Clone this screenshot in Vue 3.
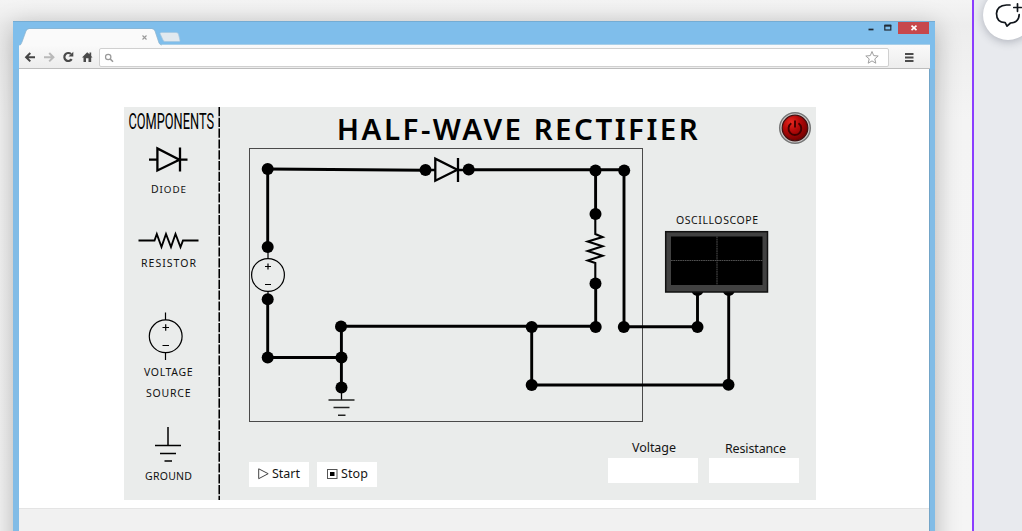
<script setup>
const joints = [
  [267.7, 169], [425.5, 170], [468.7, 169.5], [595.5, 170.5], [624.2, 170.5],
  [267.7, 247], [267.7, 299.2], [267.7, 357.5], [341, 326.5], [341.5, 357.5],
  [341.5, 387.5], [595.5, 214], [595.5, 283.5], [595.7, 327], [623.8, 327],
  [697.5, 327], [531.7, 327], [531.7, 385], [728.5, 384.7]
]
const wires = [
  'M267.5 169 425.5 170.3', 'M468.5 169.8H624', 'M267.7 169V247', 'M267.7 299V357.5H341.5',
  'M341.4 387V326.3H595.7V283', 'M595.6 170V214', 'M624 170V326.8H697.5V292',
  'M531.7 327V385H728.7V292'
]
</script>

<template>
  <div class="stage">
    <div class="desk">
      <div class="browser">
        <svg class="chrome" width="922" height="48" viewBox="13 21 922 48">
          <defs>
            <linearGradient id="bar" x1="0" y1="0" x2="0" y2="1">
              <stop offset="0" stop-color="#fafafa" /><stop offset="1" stop-color="#ececec" />
            </linearGradient>
          </defs>
          <rect x="13" y="21" width="922" height="48" fill="#7fbeeb" />
          <path d="M13 21.5H935" stroke="#75acd3" />
          <rect x="19" y="45" width="911" height="24" fill="url(#bar)" />
          <path d="M158 44.5H930" stroke="#a9cfe8" />
          <path d="M19 46Q21 45 22 42L26 31Q27 29 29 29H152Q154 29 155 31L159 43Q160 45 162 46Z" fill="#fafafa" />
          <path d="M19.5 45.5Q21 45 22 42L26 31Q27 28.5 29 28.5H152Q154 28.5 155 31L159 43Q160 45 162 45" fill="none" stroke="#8eb5cf" stroke-width=".7" />
          <path d="M161 32.500H176Q178 32.500 178.500 34L180 40.500Q180 41.500 179 41.500H165Q163.500 41.500 163 40L160 33.500Z" fill="#e1e9ef" stroke="#a5c7df" stroke-width=".7" />
          <path d="m142.500 35.500 4 4m0-4-4 4" stroke="#999" stroke-width="1.100" />
          <g fill="none" stroke-width="2">
            <path d="M35 57.200H26.500M30.300 53l-4.200 4.200 4.200 4.200" stroke="#444" />
            <path d="M44 57.200h9M49.200 53l4.200 4.200-4.200 4.200" stroke="#b9b9b9" />
            <path d="M71 54A4 4 0 1 0 71.700 59.200" stroke="#494949" stroke-width="2.200" />
          </g>
          <path d="M68.500 56.500h4.800v-4.800z" fill="#494949" />
          <path d="M82 57.500 87.200 52.200 89.500 54.300V52.500H91.200V56L92.500 57.500H91.200V62H88.500V58.300H86V62H83.500V57.500Z" fill="#494949" />
          <rect x="99.500" y="48.500" width="789" height="18" rx="1.500" fill="#fff" stroke="#d0d0d0" />
          <circle cx="108.200" cy="57" r="2.700" fill="none" stroke="#999" stroke-width="1.200" />
          <path d="m110.200 59 2.800 2.800" stroke="#999" stroke-width="1.600" />
          <path d="m872 51.500 1.700 4.100 4.500.4-3.400 2.900 1 4.300-3.800-2.300-3.800 2.300 1-4.300-3.400-2.900 4.500-.4z" fill="#fff" stroke="#a0a0a0" />
          <path d="M905 54h8.500M905 57.500h8.500M905 61h8.500" stroke="#4c4c4c" stroke-width="2" />
          <path d="M868.500 29.500h5" stroke="#222b35" stroke-width="1.700" />
          <rect x="884.800" y="25.500" width="6" height="4.500" fill="none" stroke="#222b35" stroke-width="1.200" />
          <path d="M884.500 25.600h6.700" stroke="#222b35" stroke-width="2" />
          <rect x="898" y="22" width="31" height="12" fill="#c7484c" />
          <path d="m911.500 25.700 5 4.500m0-4.500-5 4.500" stroke="#fff" stroke-width="1.700" />
          <path d="M19 69H930" stroke="#bdbdbd" stroke-width="2" />
        </svg>
        <div class="viewport">
          <div class="page">
            <div class="panel">
              <aside>
                <svg width="96" height="393" viewBox="124 107 96 393">
                  <text class="heading" transform="translate(128.500 129) scale(.568 1)">COMPONENTS</text>
                  <g fill="none" stroke="#000">
                    <path d="M149 159.700h8M157.400 148.500v22l22-10.800zM180 147.500v24M180 159.700h7.500" stroke-width="2.300" />
                    <path d="M138.500 240.500H154.500L156.800 234 161.500 247 166 234 171 247 175.500 234 180.500 247 183 240.500H198.500" stroke-width="1.900" />
                    <circle cx="165.700" cy="336.300" r="16.400" stroke-width="1.200" />
                    <path d="M165.500 312.500V320M165.500 352.700V360M162.500 327.500h6.500M165.700 324.300v6.500M162.500 345.500h6.500" stroke-width="1.200" />
                    <path d="M168 427V445.500" stroke-width="1.500" />
                    <path d="M155 445.500h26M160 453.500h16M164.500 461h7.500" stroke-width="1.500" />
                  </g>
                  <g class="label">
                    <text x="151" y="193" textLength="35">D<tspan class="small-caps">IODE</tspan></text>
                    <text x="141" y="267.200" textLength="55">RESISTOR</text>
                    <text x="144" y="376" textLength="48.500">VOLTAGE</text>
                    <text x="146" y="397" textLength="44.500">SOURCE</text>
                    <text x="145" y="480.200" textLength="47">GROUND</text>
                  </g>
                  <path d="M219.300 107V500" stroke="#000" stroke-width="1.700" stroke-dasharray="9.200 1.600" />
                </svg>
              </aside>
              <main>
                <svg width="596" height="323" viewBox="220 107 596 323">
                  <defs>
                    <radialGradient id="red" cx=".35" cy=".28" r=".75">
                      <stop offset="0" stop-color="#e92920" /><stop offset=".45" stop-color="#b50909" /><stop offset="1" stop-color="#720000" />
                    </radialGradient>
                  </defs>
                  <text class="title" x="336.800" y="140.200" textLength="361">HALF-WAVE RECTIFIER</text>
                  <circle cx="795" cy="128" r="15.300" fill="#cecece" stroke="#777" stroke-width="1.500" />
                  <circle cx="795" cy="128" r="12.800" fill="url(#red)" stroke="#441111" stroke-width="1.300" />
                  <path d="M791.300 123.300A6.400 6.400 0 1 0 798.500 123.300M795 120.500v7" fill="none" stroke="#420000" stroke-width="1.900" />
                  <rect x="249.500" y="148.500" width="393" height="273" fill="none" stroke="#4a4a4a" />
                  <g fill="none" stroke="#000">
                    <path v-for="d in wires" :key="d" :d="d" stroke-width="2.900" />
                    <path d="M430 170h5M435.300 158.700v22l22-11zM458 158v24M458 170h6" stroke-width="2.300" />
                    <circle cx="268" cy="275" r="16.400" stroke-width="1.200" />
                    <path d="M268 252v7M268 291v4M265 266.500h6M268 263.500v6M265 284.500h6" stroke-width="1.200" />
                    <path d="M595.300 219V234L602.500 237 587.800 241.500 602.500 246.200 587.800 251 602.500 255.700 587.800 260.500 595.300 263V279" stroke-width="2.100" />
                    <path d="M341.500 391v9" stroke-width="1.300" />
                    <path d="M328.500 400h26M333.500 407.500h16M338 415.200h7.500" stroke="#222" stroke-width="1.500" />
                  </g>
                  <circle v-for="([x, y], i) in joints" :key="i" :cx="x" :cy="y" r="6" />
                  <g class="label"><text x="676" y="224" textLength="82">OSCILLOSCOPE</text></g>
                  <circle cx="697.500" cy="290.200" r="5.900" />
                  <circle cx="728.800" cy="290.200" r="5.900" />
                  <rect x="665.700" y="231.700" width="101.800" height="60.300" fill="#414141" stroke="#111" stroke-width="1.500" />
                  <rect x="671" y="236.500" width="91.500" height="48.500" fill="#000" />
                  <path d="M671 260.500h91.500M717 236.500v48.500" stroke="#505050" stroke-dasharray="1.700 .6" />
                </svg>
                <div class="controls">
                  <button class="start">
                    <svg width="11" height="12"><path d="M.7.8V10.700L10.200 5.700z" fill="none" stroke="#444" /></svg>
                    <svg class="word" width="29" height="18"><text x="0" y="13" textLength="28">Start</text></svg>
                  </button>
                  <button class="stop">
                    <svg width="11" height="12"><rect x=".5" y="1.500" width="9.500" height="9" fill="none" stroke="#555" /><path d="M3 4h4.500v4H3z" /></svg>
                    <svg class="word" width="29" height="18"><text x="0" y="13" textLength="27">Stop</text></svg>
                  </button>
                  <label class="voltage">
                    <svg class="word" width="90" height="20"><text x="24" y="14" textLength="44">Voltage</text></svg>
                    <input aria-label="Voltage">
                  </label>
                  <label class="resistance">
                    <svg class="word" width="90" height="20"><text x="16" y="15" textLength="61">Resistance</text></svg>
                    <input aria-label="Resistance">
                  </label>
                </div>
              </main>
            </div>
          </div>
          <footer />
        </div>
      </div>
    </div>
    <div class="gutter">
      <div class="comment">
        <svg width="44" height="44" viewBox="983 -4 44 44" fill="none" stroke="#10151b" stroke-width="1.700" stroke-linecap="round" stroke-linejoin="round">
          <path d="M1010 5H1006.500Q997 5.500 996.500 13.500Q996.500 22.300 1005.200 22.700L1007 26.200 1010.500 23Q1019 22.500 1019.200 14.500" />
          <path d="M1017.500 3.800v7.500M1013.800 7.500h7.500" />
        </svg>
      </div>
    </div>
  </div>
</template>

<style>
body { margin: 0; overflow: hidden; }
</style>

<style scoped>
.stage { width: 1022px; height: 531px; display: flex; overflow: hidden; font-family: "Noto Sans", sans-serif; }
svg { display: block; flex: none; }
.desk { width: 972px; box-sizing: border-box; padding: 21px 0 0 13px; overflow: hidden; background: linear-gradient(#f4f4f4, #ededed 25px, #f4f4f4 120px, #f5f5f5); }
.browser { width: 922px; height: 540px; background: #82bce6; box-shadow: 0 6px 24px rgba(0, 0, 0, .28); }
.viewport { margin: 0 5px 0 6px; height: 462px; background: #fff; border-right: 1px solid #73a5c8; box-sizing: border-box; }
.page { height: 439px; box-sizing: border-box; padding: 38px 0 0 105px; }
.panel { display: flex; width: 692px; height: 393px; background: #eaeceb; }
aside { width: 96px; }
main { width: 596px; }
footer { height: 23px; background: #f1f1f1; border-top: 1px solid #e4e4e4; }
.heading { font: 400 22.500px Roboto, sans-serif; }
.label { font-size: 10.500px; fill: #111; }
.small-caps { font-size: 9.800px; }
.title { font-size: 29.500px; font-weight: 600; }
.controls { display: flex; height: 70px; padding-left: 29px; }
button { border: 0; padding: 0 0 2px 9px; box-sizing: border-box; width: 60px; height: 25px; margin-top: 32px; background: #fff; display: flex; align-items: center; gap: 3px; font-family: inherit; }
.stop { margin-left: 8px; padding-left: 10px; }
.word { font-size: 12.500px; fill: #151515; }
label { display: block; width: 90px; }
.voltage { margin-left: 231px; padding-top: 8px; }
.resistance { margin-left: 11px; padding-top: 8px; }
input { display: block; box-sizing: border-box; width: 90px; height: 25px; border: 0; background: #fff; padding: 0; }
.gutter { flex: 1; background: #e8eaee; border-left: 2px solid #8b3dff; padding-left: 9px; overflow: hidden; }
.comment { width: 50px; height: 50px; border-radius: 50%; background: #fff; margin-top: -10px; box-shadow: 0 2px 9px rgba(50, 55, 75, .3); padding: 6px 0 0; box-sizing: border-box; }
</style>
